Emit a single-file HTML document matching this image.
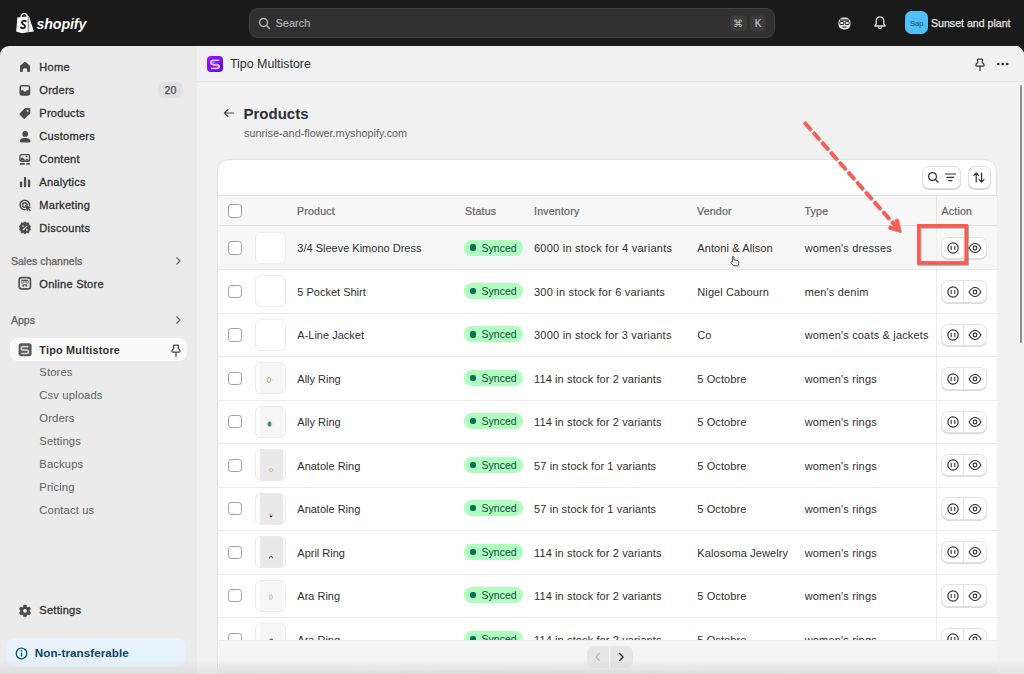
<!DOCTYPE html>
<html><head><meta charset="utf-8">
<style>
*{box-sizing:border-box;margin:0;padding:0}
html,body{width:1024px;height:674px;overflow:hidden;background:#1a1a1a;font-family:"Liberation Sans",sans-serif;color:#303030;font-size:11px}
.a{position:absolute;white-space:nowrap}
.t{position:absolute;white-space:nowrap;line-height:14px}
#frame{position:absolute;left:0;top:46px;width:1024px;height:628px;background:#ebebeb;border-radius:9px 9px 0 0;overflow:hidden}
#main{position:absolute;left:197px;top:0;width:827px;height:628px;background:#f1f1f1}
.nav{position:absolute;left:39.3px;font-size:11.1px;letter-spacing:0.24px;color:#303030;-webkit-text-stroke:0.3px #303030;white-space:nowrap;line-height:14px}
.sub{position:absolute;left:39.3px;font-size:11.3px;letter-spacing:0.1px;color:#616161;white-space:nowrap;line-height:15px}
.si{position:absolute;left:17.8px;width:14px;height:14px}
.sec{position:absolute;left:11px;font-size:10.5px;color:#616161;-webkit-text-stroke:0.25px #616161;line-height:14px}
.hd{font-size:10.6px;letter-spacing:0.2px;color:#616161;-webkit-text-stroke:0.2px #616161}
.rw{position:absolute;left:0;width:778px;height:43.48px}
.cb{position:absolute;left:9.5px;top:15.4px;width:13.6px;height:13.2px;border-radius:3.3px;border:1px solid #a0a0a0;background:#fff}
.th{position:absolute;left:36px;top:6px;width:31.8px;height:32px;border-radius:6px;border:1px solid #ebebeb;background:#fff;overflow:hidden}
.rw .t{top:15.4px;font-size:11px;color:#303030}
.c1{left:78.8px}.c3{left:315.5px;letter-spacing:0.22px}.c4{left:478.8px;letter-spacing:0.1px}.c5{left:586.2px;letter-spacing:0.17px}
.bd{position:absolute;left:245.9px;top:13.5px;width:59px;height:16px;border-radius:8px;background:#affebf;color:#0c4d3a;font-size:10.5px;line-height:16px;padding-left:17.2px;white-space:nowrap}
.dot{position:absolute;left:5.3px;top:4.9px;width:6.2px;height:6.2px;border-radius:2.2px;background:#0d6f55}
.ag{position:absolute;left:722.7px;top:10.6px;width:45.4px;height:22.5px;border-radius:7px;border:1px solid #e3e3e3;background:#fff;box-shadow:0 1px 0 #dcdcdc}
.ag:after{content:"";position:absolute;left:20.8px;top:0;width:1px;height:100%;background:#e3e3e3}
.ic1{position:absolute;left:3.9px;top:3.5px}
.ic2{position:absolute;left:25.7px;top:3.5px}
.chev{position:absolute;left:174px;width:8px;height:10px}
</style></head><body>
<!-- TOP BAR -->
<svg class="a" style="left:16px;top:13px" width="19" height="21" viewBox="0 0 19 21"><path d="M1.3 4.6 L12.8 3.2 L17.7 18.2 L6 20.2 L0.2 18.6 Z" fill="#fff"/><path d="M12.8 3.2 L17.7 18.2 L12.2 19.3 Z" fill="#f0f0f0"/><path d="M12.2 4 L12.2 19.3" stroke="#1a1a1a" stroke-width="0.6"/><path d="M5 4.8 C5 1.5 6.8 0.5 8.4 0.5 C10 0.5 11.3 1.8 11.6 4.2" stroke="#fff" stroke-width="1.3" fill="none"/><path d="M9.8 8.2 C8.6 7.4 6 7.6 6 9.6 C6 11.5 9 11.4 9 13.4 C9 15.2 6.5 15.6 5 14.6" stroke="#1a1a1a" stroke-width="1.9" fill="none" stroke-linecap="round"/></svg>
<div class="a" style="left:36.5px;top:14.5px;font-size:14.2px;font-weight:bold;font-style:italic;color:#fff;line-height:18px;letter-spacing:-0.1px">shopify</div>

<div class="a" style="left:249px;top:8px;width:525.5px;height:29.8px;border-radius:9px;background:#303030;border:1px solid #424242"></div>
<svg class="a" style="left:258.3px;top:16.8px" width="13" height="13" viewBox="0 0 13 13"><circle cx="5.5" cy="5.5" r="4" stroke="#b5b5b5" stroke-width="1.4" fill="none"/><path d="M8.5 8.5 L11.5 11.5" stroke="#b5b5b5" stroke-width="1.4" stroke-linecap="round"/></svg>
<div class="t" style="left:275.5px;top:16px;color:#b9b9b9;font-size:11px;-webkit-text-stroke:0.15px #b9b9b9">Search</div>
<div class="a" style="left:730.4px;top:15.3px;width:16.2px;height:16px;border-radius:4px;background:#3b3b3b;color:#c4c4c4;font-size:10px;line-height:17px;text-align:center">&#8984;</div>
<div class="a" style="left:750.2px;top:15.3px;width:16px;height:16px;border-radius:4px;background:#3b3b3b;color:#c4c4c4;font-size:10px;line-height:17px;text-align:center;-webkit-text-stroke:0.2px #c4c4c4">K</div>

<svg class="a" style="left:837px;top:15.6px" width="15" height="15" viewBox="0 0 15 15"><rect x="1.5" y="1.5" width="12" height="12" rx="5" fill="#e3e3e3"/><rect x="2.8" y="5.5" width="4" height="3" rx="1" fill="none" stroke="#1a1a1a" stroke-width="1"/><rect x="8.2" y="5.5" width="4" height="3" rx="1" fill="none" stroke="#1a1a1a" stroke-width="1"/><path d="M3 4 L12 4" stroke="#1a1a1a" stroke-width="1.2"/><path d="M5.5 11 L9.5 11" stroke="#1a1a1a" stroke-width="1"/></svg>
<svg class="a" style="left:873.3px;top:15.4px" width="14" height="15" viewBox="0 0 14 15"><path d="M7 1.8 C4.5 1.8 3.2 3.8 3.2 6 L3.2 8.8 L1.8 11 L12.2 11 L10.8 8.8 L10.8 6 C10.8 3.8 9.5 1.8 7 1.8 Z" fill="none" stroke="#e3e3e3" stroke-width="1.3" stroke-linejoin="round"/><path d="M5.5 12.8 Q7 14.2 8.5 12.8" stroke="#e3e3e3" stroke-width="1.3" fill="none" stroke-linecap="round"/></svg>
<div class="a" style="left:905px;top:10.9px;width:23.3px;height:23.6px;border-radius:6.5px;background:#4fc1f7;color:#1d4660;font-size:7.6px;line-height:25.5px;text-align:center">Sap</div>
<div class="t" style="left:931px;top:16px;color:#e6e6e6;font-size:10.6px;-webkit-text-stroke:0.25px #e6e6e6">Sunset and plant</div>

<div id="frame">
  <!-- SIDEBAR -->
  <svg class="si" style="top:14.9px" viewBox="0 0 14 14"><path d="M7 1 Q7.5 1 7.9 1.35 L11.6 4.6 Q12 5 12 5.6 L12 10 Q12 11 11 11 L9.2 11 L9.2 8.7 Q9.2 7.3 7 7.3 Q4.8 7.3 4.8 8.7 L4.8 11 L3 11 Q2 11 2 10 L2 5.6 Q2 5 2.4 4.6 L6.1 1.35 Q6.5 1 7 1 Z" fill="#4a4a4a"/></svg>
  <div class="nav" style="top:14px">Home</div>
  <svg class="si" style="top:37.9px" viewBox="0 0 14 14"><rect x="1.5" y="1" width="10.8" height="10.7" rx="2.6" fill="#4a4a4a"/><path d="M3.1 2.6 L10.7 2.6 L10.7 6.3 L8.7 6.3 Q8.3 6.3 8 6.7 L7.5 7.4 Q6.9 8.1 6.3 7.4 L5.8 6.7 Q5.5 6.3 5.1 6.3 L3.1 6.3 Z" fill="#ebebeb"/></svg>
  <div class="nav" style="top:37px">Orders</div>
  <div class="a" style="left:158.2px;top:35.9px;width:24.6px;height:16px;border-radius:6px;background:#e0e0e0;color:#4f4f4f;font-size:10.6px;line-height:16.9px;text-align:center;-webkit-text-stroke:0.25px #4f4f4f">20</div>
  <svg class="si" style="top:60.9px" viewBox="0 0 14 14"><path d="M7.6 1 L11.3 1 Q12.3 1 12.3 2 L12.3 5.7 Q12.3 6.3 11.9 6.7 L6.9 11.6 Q6.2 12.3 5.5 11.6 L1.7 7.8 Q1 7.1 1.7 6.4 L6.6 1.4 Q7 1 7.6 1 Z" fill="#4a4a4a"/><circle cx="9.6" cy="3.7" r="1.05" fill="#ebebeb"/></svg>
  <div class="nav" style="top:60px">Products</div>
  <svg class="si" style="top:83.6px" viewBox="0 0 14 14"><circle cx="7.2" cy="3.9" r="2.9" fill="#4a4a4a"/><path d="M1.9 11.3 Q1.9 7.9 7.2 7.9 Q12.5 7.9 12.5 11.3 Q12.5 12.4 11.4 12.4 L3 12.4 Q1.9 12.4 1.9 11.3 Z" fill="#4a4a4a"/></svg>
  <div class="nav" style="top:83px">Customers</div>
  <svg class="si" style="top:106.9px" viewBox="0 0 14 14"><rect x="1.3" y="1" width="10.9" height="7.9" rx="2" fill="#4a4a4a"/><rect x="2.6" y="2.3" width="8.3" height="5.3" rx="0.8" fill="#ebebeb"/><path d="M2.6 6 L4.3 4.2 L7.3 6.9 L8.8 5.6 L10.9 6.9 L10.9 7.6 L2.6 7.6 Z" fill="#4a4a4a"/><circle cx="8.5" cy="3.6" r="0.85" fill="#4a4a4a"/><rect x="2" y="10.1" width="4.9" height="1.6" rx="0.5" fill="#4a4a4a"/><rect x="8.4" y="10.1" width="3.4" height="1.6" rx="0.5" fill="#4a4a4a"/></svg>
  <div class="nav" style="top:106px">Content</div>
  <svg class="si" style="top:129.8px" viewBox="0 0 14 14"><rect x="1.9" y="5.6" width="2.3" height="5.6" rx="0.9" fill="#4a4a4a"/><rect x="5.9" y="1" width="2.3" height="10.2" rx="0.9" fill="#4a4a4a"/><rect x="9.9" y="3.6" width="2.3" height="7.6" rx="0.9" fill="#4a4a4a"/></svg>
  <div class="nav" style="top:129px">Analytics</div>
  <svg class="si" style="top:152px" viewBox="0 0 14 14"><path d="M11.6 7.3 A4.8 4.8 0 1 0 7.1 11.8" fill="none" stroke="#4a4a4a" stroke-width="1.5" stroke-linecap="round"/><path d="M9.1 6.9 A2.3 2.3 0 1 0 6.8 9.3" fill="none" stroke="#4a4a4a" stroke-width="1.4" stroke-linecap="round"/><path d="M6.9 7 L12.9 9.3 L10.7 10.2 L12.9 12.4 L12.2 13.1 L10 10.9 L9.2 13 Z" fill="#4a4a4a" stroke="#4a4a4a" stroke-width="0.4" stroke-linejoin="round"/></svg>
  <div class="nav" style="top:152px">Marketing</div>
  <svg class="si" style="top:175.3px" viewBox="0 0 14 14"><path d="M7 0.7 L8.6 2 L10.6 1.8 L11 3.8 L12.7 5 L11.9 6.9 L12.7 8.8 L11 10 L10.6 12 L8.6 11.8 L7 13.1 L5.4 11.8 L3.4 12 L3 10 L1.3 8.8 L2.1 6.9 L1.3 5 L3 3.8 L3.4 1.8 L5.4 2 Z" fill="#4a4a4a" stroke="#4a4a4a" stroke-width="0.6" stroke-linejoin="round"/><path d="M5.1 8.9 L8.9 5.1" stroke="#ebebeb" stroke-width="1.1" stroke-linecap="round"/><rect x="4.4" y="4.4" width="1.5" height="1.5" rx="0.3" fill="#ebebeb"/><rect x="8.1" y="8" width="1.5" height="1.7" rx="0.3" fill="#ebebeb"/></svg>
  <div class="nav" style="top:175px">Discounts</div>

  <div class="sec" style="top:208px">Sales channels</div>
  <svg class="chev" style="top:210px" viewBox="0 0 8 10"><path d="M2.5 1.5 L6 5 L2.5 8.5" stroke="#616161" stroke-width="1.2" fill="none"/></svg>
  <svg class="si" style="top:230.3px" viewBox="0 0 14 14"><rect x="1.15" y="1.55" width="11.3" height="11.3" rx="2.4" fill="none" stroke="#545454" stroke-width="1.7"/><rect x="3.3" y="3.7" width="7" height="1.5" fill="#545454"/><path d="M3.3 5.2 L3.3 6.6 Q3.3 7.3 4 7.3 L4.6 7.3 Q5.3 7.3 5.3 6.6 L5.3 5.2 M6.8 5.2 L6.8 6.8 M8.3 5.2 L8.3 6.6 Q8.3 7.3 9 7.3 L9.6 7.3 Q10.3 7.3 10.3 6.6 L10.3 5.2" fill="none" stroke="#6a6a6a" stroke-width="0.9"/><path d="M4.4 10.8 L4.4 8.9 Q4.4 8.2 5.1 8.2 L8.5 8.2 Q9.2 8.2 9.2 8.9 L9.2 10.8 L7.7 10.8 L7.7 9.6 L5.9 9.6 L5.9 10.8 Z" fill="#545454"/></svg>
  <div class="nav" style="top:231px">Online Store</div>

  <div class="sec" style="top:267px">Apps</div>
  <svg class="chev" style="top:269px" viewBox="0 0 8 10"><path d="M2.5 1.5 L6 5 L2.5 8.5" stroke="#616161" stroke-width="1.2" fill="none"/></svg>
  <div class="a" style="left:10px;top:292px;width:177px;height:23px;border-radius:8px;background:#fafafa"></div>
  <svg class="si" style="top:296.7px;left:17.5px" viewBox="0 0 14 14"><rect x="0.6" y="0.2" width="13" height="13" rx="2.6" fill="#5a5a5a"/><path d="M10.4 3.6 L5.3 3.6 Q3.3 3.6 3.3 5.4 Q3.3 7.1 5.3 7.1 L8.6 7.1 Q10.5 7.1 10.5 8.8 Q10.5 10.5 8.6 10.5 L3.3 10.5" stroke="#d2d2d2" stroke-width="1.6" fill="none"/></svg>
  <div class="nav" style="top:296.5px;font-size:10.8px;font-weight:bold;-webkit-text-stroke:0">Tipo Multistore</div>
  <svg class="a" style="left:169.5px;top:297.5px" width="12" height="13" viewBox="0 0 12 13"><path d="M4.2 1.1 L7.8 1.1 Q8.8 1.1 8.6 2.1 L8.1 4.5 Q9.9 5.5 10.1 7.1 Q10.2 8.1 9.3 8.1 L2.7 8.1 Q1.8 8.1 1.9 7.1 Q2.1 5.5 3.9 4.5 L3.4 2.1 Q3.2 1.1 4.2 1.1 Z" fill="none" stroke="#4a4a4a" stroke-width="1.15" stroke-linejoin="round"/><path d="M6 8.1 L6 12.4" stroke="#4a4a4a" stroke-width="1.2" stroke-linecap="round"/></svg>
  <div class="sub" style="top:319px">Stores</div>
  <div class="sub" style="top:342px">Csv uploads</div>
  <div class="sub" style="top:365px">Orders</div>
  <div class="sub" style="top:388px">Settings</div>
  <div class="sub" style="top:411px">Backups</div>
  <div class="sub" style="top:434px">Pricing</div>
  <div class="sub" style="top:457px">Contact us</div>

  <svg class="si" style="top:557.6px" viewBox="0 0 14 14"><path d="M5.8 1 L8.2 1 L8.6 2.7 L9.8 3.4 L11.5 2.9 L12.7 5 L11.4 6.2 L11.4 7.6 L12.7 8.8 L11.5 10.9 L9.8 10.4 L8.6 11.1 L8.2 12.8 L5.8 12.8 L5.4 11.1 L4.2 10.4 L2.5 10.9 L1.3 8.8 L2.6 7.6 L2.6 6.2 L1.3 5 L2.5 2.9 L4.2 3.4 L5.4 2.7 Z" fill="#4a4a4a" stroke="#4a4a4a" stroke-width="0.5" stroke-linejoin="round"/><circle cx="7" cy="6.9" r="1.9" fill="#ebebeb"/></svg>
  <div class="nav" style="top:557px">Settings</div>

  <div class="a" style="left:6.8px;top:592px;width:178px;height:29px;border-radius:8px;background:#e7f2fc"></div>
  <svg class="a" style="left:15px;top:600.5px" width="13" height="13" viewBox="0 0 13 13"><circle cx="6.5" cy="6.5" r="5.3" fill="none" stroke="#00527c" stroke-width="1.3"/><path d="M6.5 5.8 L6.5 9.5" stroke="#00527c" stroke-width="1.4"/><circle cx="6.5" cy="3.9" r="0.8" fill="#00527c"/></svg>
  <div class="nav" style="left:34.8px;top:600px;color:#0e4466;font-size:11.6px;font-weight:bold;-webkit-text-stroke:0;letter-spacing:0.08px">Non-transferable</div>

  <div id="main"></div>
</div>
<!-- MAIN -->
<div class="a" style="left:197px;top:81px;width:827px;height:1px;background:#e6e6e6"></div>
<div class="a" style="left:207px;top:56px;width:16px;height:16px;border-radius:4px;background:linear-gradient(135deg,#a214ff,#5b06e6)"></div>
<svg class="a" style="left:207px;top:56px" width="16" height="16" viewBox="0 0 16 16"><path d="M12.3 4.4 L6.3 4.4 Q4 4.4 4 6.6 Q4 8.7 6.3 8.7 L9.7 8.7 Q12 8.7 12 10.5 Q12 12.4 9.7 12.4 L3.9 12.4" stroke="#dcbfff" stroke-width="1.9" fill="none"/><circle cx="6.3" cy="6.6" r="1.4" fill="#1fa8ff"/><circle cx="9.6" cy="9.3" r="1.4" fill="#ffa21a"/></svg>
<div class="t" style="left:230px;top:57px;font-size:12.4px;color:#303030">Tipo Multistore</div>
<svg class="a" style="left:973.6px;top:57.5px" width="12" height="13" viewBox="0 0 12 13"><path d="M4.2 1.1 L7.8 1.1 Q8.8 1.1 8.6 2.1 L8.1 4.5 Q9.9 5.5 10.1 7.1 Q10.2 8.1 9.3 8.1 L2.7 8.1 Q1.8 8.1 1.9 7.1 Q2.1 5.5 3.9 4.5 L3.4 2.1 Q3.2 1.1 4.2 1.1 Z" fill="none" stroke="#303030" stroke-width="1.15" stroke-linejoin="round"/><path d="M6 8.1 L6 12.4" stroke="#303030" stroke-width="1.2" stroke-linecap="round"/></svg>
<svg class="a" style="left:996px;top:62px" width="14" height="5" viewBox="0 0 14 5"><circle cx="2.2" cy="2" r="1.3" fill="#303030"/><circle cx="6.7" cy="2" r="1.3" fill="#303030"/><circle cx="11.2" cy="2" r="1.3" fill="#303030"/></svg>
<div class="a" style="left:1020.2px;top:85px;width:2.2px;height:258px;border-radius:1.5px;background:#8f8f8f"></div>

<svg class="a" style="left:222px;top:107px" width="14" height="12" viewBox="0 0 14 12"><path d="M11.7 6 L2.6 6 M6 2.5 L2.4 6 L6 9.5" stroke="#4a4a4a" stroke-width="1.15" fill="none" stroke-linecap="round" stroke-linejoin="round"/></svg>
<div class="t" style="left:243.5px;top:105px;font-size:15px;font-weight:bold;color:#303030;line-height:18px">Products</div>
<div class="t" style="left:244px;top:126px;font-size:10.85px;color:#616161">sunrise-and-flower.myshopify.com</div>

<!-- CARD -->
<div class="a" style="left:217.3px;top:159px;width:780px;height:520px;border-radius:12px;background:#fff;border:1px solid #e3e3e3"></div>
<div class="a" style="left:922.3px;top:166.3px;width:38.8px;height:22.3px;border-radius:7px;background:#fff;border:1px solid #dedede;box-shadow:0 1px 0 #d4d4d4"></div>
<svg class="a" style="left:927px;top:171px" width="14" height="13" viewBox="0 0 14 13"><circle cx="5.5" cy="5.5" r="3.9" stroke="#303030" stroke-width="1.3" fill="none"/><path d="M8.4 8.4 L11 11" stroke="#303030" stroke-width="1.3" stroke-linecap="round"/></svg>
<svg class="a" style="left:942.5px;top:171px" width="14" height="13" viewBox="0 0 14 13"><path d="M2.3 3 L12.5 3 M4 6.3 L10.8 6.3 M5.8 9.6 L9 9.6" stroke="#303030" stroke-width="1.2" stroke-linecap="round"/></svg>
<div class="a" style="left:968.3px;top:166.3px;width:22.5px;height:22.3px;border-radius:7px;background:#fff;border:1px solid #dedede;box-shadow:0 1px 0 #d4d4d4"></div>
<svg class="a" style="left:972px;top:171px" width="14" height="13" viewBox="0 0 14 13"><path d="M4.2 11 L4.2 2 M1.8 4.4 L4.2 2 L6.6 4.4 M9.6 2 L9.6 11 M7.2 8.6 L9.6 11 L12 8.6" stroke="#303030" stroke-width="1.2" fill="none" stroke-linecap="round" stroke-linejoin="round"/></svg>

<div class="a" style="left:218.5px;top:195px;width:778px;height:31px;background:#f7f7f7;border-top:1px solid #e3e3e3;border-bottom:1px solid #e3e3e3"></div>
<div class="a" style="left:228px;top:204.2px;width:13.6px;height:13.4px;border-radius:3.3px;border:1px solid #a0a0a0;background:#fff"></div>
<div class="t hd" style="left:297px;top:204px">Product</div>
<div class="t hd" style="left:465px;top:204px">Status</div>
<div class="t hd" style="left:534px;top:204px">Inventory</div>
<div class="t hd" style="left:697px;top:204px">Vendor</div>
<div class="t hd" style="left:804.5px;top:204px">Type</div>
<div class="t hd" style="left:941.5px;top:204px">Action</div>
<div class="a" style="left:935.8px;top:196px;width:1px;height:30px;background:#e3e3e3"></div>
<!--ROWS--><div class="a" style="left:218.5px;top:226px;width:778px;height:414.4px;overflow:hidden">
<div class="rw" style="top:0.0px;background:#f7f7f7">
<div class="cb"></div>
<div class="th"></div>
<div class="t c1">3/4 Sleeve Kimono Dress</div>
<div class="bd"><span class="dot"></span>Synced</div>
<div class="t c3" style="letter-spacing:0.24px">6000 in stock for 4 variants</div>
<div class="t c4">Antoni &amp; Alison</div>
<div class="t c5">women&#39;s dresses</div>
<div class="ag"><svg class="ic1" width="14" height="14" viewBox="0 0 14 14"><circle cx="7" cy="7" r="5.15" fill="none" stroke="#303030" stroke-width="1.15"/><path d="M5.2 5.4 L5.2 8.6 M8.8 5.4 L8.8 8.6" stroke="#303030" stroke-width="1.1" stroke-linecap="round"/></svg><svg class="ic2" width="14" height="14" viewBox="0 0 14 14"><path d="M1.1 7 C2.9 3.7 4.9 2.5 7 2.5 C9.1 2.5 11.1 3.7 12.9 7 C11.1 10.3 9.1 11.5 7 11.5 C4.9 11.5 2.9 10.3 1.1 7 Z" fill="none" stroke="#303030" stroke-width="1.1" stroke-linejoin="round"/><circle cx="7" cy="7" r="1.85" fill="none" stroke="#303030" stroke-width="1.15"/></svg></div>
</div>
<div class="rw" style="top:43.48px;background:#fff">
<div class="cb"></div>
<div class="th"></div>
<div class="t c1">5 Pocket Shirt</div>
<div class="bd"><span class="dot"></span>Synced</div>
<div class="t c3" style="letter-spacing:0.21px">300 in stock for 6 variants</div>
<div class="t c4">Nigel Cabourn</div>
<div class="t c5">men&#39;s denim</div>
<div class="ag"><svg class="ic1" width="14" height="14" viewBox="0 0 14 14"><circle cx="7" cy="7" r="5.15" fill="none" stroke="#303030" stroke-width="1.15"/><path d="M5.2 5.4 L5.2 8.6 M8.8 5.4 L8.8 8.6" stroke="#303030" stroke-width="1.1" stroke-linecap="round"/></svg><svg class="ic2" width="14" height="14" viewBox="0 0 14 14"><path d="M1.1 7 C2.9 3.7 4.9 2.5 7 2.5 C9.1 2.5 11.1 3.7 12.9 7 C11.1 10.3 9.1 11.5 7 11.5 C4.9 11.5 2.9 10.3 1.1 7 Z" fill="none" stroke="#303030" stroke-width="1.1" stroke-linejoin="round"/><circle cx="7" cy="7" r="1.85" fill="none" stroke="#303030" stroke-width="1.15"/></svg></div>
</div>
<div class="rw" style="top:86.96px;background:#fff">
<div class="cb"></div>
<div class="th"></div>
<div class="t c1">A-Line Jacket</div>
<div class="bd"><span class="dot"></span>Synced</div>
<div class="t c3" style="letter-spacing:0.22px">3000 in stock for 3 variants</div>
<div class="t c4">Co</div>
<div class="t c5">women&#39;s coats &amp; jackets</div>
<div class="ag"><svg class="ic1" width="14" height="14" viewBox="0 0 14 14"><circle cx="7" cy="7" r="5.15" fill="none" stroke="#303030" stroke-width="1.15"/><path d="M5.2 5.4 L5.2 8.6 M8.8 5.4 L8.8 8.6" stroke="#303030" stroke-width="1.1" stroke-linecap="round"/></svg><svg class="ic2" width="14" height="14" viewBox="0 0 14 14"><path d="M1.1 7 C2.9 3.7 4.9 2.5 7 2.5 C9.1 2.5 11.1 3.7 12.9 7 C11.1 10.3 9.1 11.5 7 11.5 C4.9 11.5 2.9 10.3 1.1 7 Z" fill="none" stroke="#303030" stroke-width="1.1" stroke-linejoin="round"/><circle cx="7" cy="7" r="1.85" fill="none" stroke="#303030" stroke-width="1.15"/></svg></div>
</div>
<div class="rw" style="top:130.44px;background:#fff">
<div class="cb"></div>
<div class="th"><svg width="30" height="30" viewBox="0 0 30 30" style="position:absolute;left:0;top:0"><rect x="3.8" y="0" width="23.5" height="30" fill="#f6f6f6"/><ellipse cx="12.9" cy="17" rx="1.7" ry="2.5" fill="#f4f1ea" stroke="#c29a5c" stroke-width="0.85" transform="rotate(15 12.9 17)"/><path d="M14.6 16.8 L17 17.2" stroke="#d9c49a" stroke-width="0.6"/></svg></div>
<div class="t c1">Ally Ring</div>
<div class="bd"><span class="dot"></span>Synced</div>
<div class="t c3" style="letter-spacing:0.115px">114 in stock for 2 variants</div>
<div class="t c4">5 Octobre</div>
<div class="t c5">women&#39;s rings</div>
<div class="ag"><svg class="ic1" width="14" height="14" viewBox="0 0 14 14"><circle cx="7" cy="7" r="5.15" fill="none" stroke="#303030" stroke-width="1.15"/><path d="M5.2 5.4 L5.2 8.6 M8.8 5.4 L8.8 8.6" stroke="#303030" stroke-width="1.1" stroke-linecap="round"/></svg><svg class="ic2" width="14" height="14" viewBox="0 0 14 14"><path d="M1.1 7 C2.9 3.7 4.9 2.5 7 2.5 C9.1 2.5 11.1 3.7 12.9 7 C11.1 10.3 9.1 11.5 7 11.5 C4.9 11.5 2.9 10.3 1.1 7 Z" fill="none" stroke="#303030" stroke-width="1.1" stroke-linejoin="round"/><circle cx="7" cy="7" r="1.85" fill="none" stroke="#303030" stroke-width="1.15"/></svg></div>
</div>
<div class="rw" style="top:173.92px;background:#fff">
<div class="cb"></div>
<div class="th"><svg width="30" height="30" viewBox="0 0 30 30" style="position:absolute;left:0;top:0"><rect x="3.8" y="0" width="23.5" height="30" fill="#f6f6f6"/><ellipse cx="13.5" cy="17" rx="1.9" ry="2.5" fill="#17966a" stroke="#c9a66b" stroke-width="0.5"/><path d="M15.4 17 L17 17" stroke="#d9c49a" stroke-width="0.5"/></svg></div>
<div class="t c1">Ally Ring</div>
<div class="bd"><span class="dot"></span>Synced</div>
<div class="t c3" style="letter-spacing:0.115px">114 in stock for 2 variants</div>
<div class="t c4">5 Octobre</div>
<div class="t c5">women&#39;s rings</div>
<div class="ag"><svg class="ic1" width="14" height="14" viewBox="0 0 14 14"><circle cx="7" cy="7" r="5.15" fill="none" stroke="#303030" stroke-width="1.15"/><path d="M5.2 5.4 L5.2 8.6 M8.8 5.4 L8.8 8.6" stroke="#303030" stroke-width="1.1" stroke-linecap="round"/></svg><svg class="ic2" width="14" height="14" viewBox="0 0 14 14"><path d="M1.1 7 C2.9 3.7 4.9 2.5 7 2.5 C9.1 2.5 11.1 3.7 12.9 7 C11.1 10.3 9.1 11.5 7 11.5 C4.9 11.5 2.9 10.3 1.1 7 Z" fill="none" stroke="#303030" stroke-width="1.1" stroke-linejoin="round"/><circle cx="7" cy="7" r="1.85" fill="none" stroke="#303030" stroke-width="1.15"/></svg></div>
</div>
<div class="rw" style="top:217.4px;background:#fff">
<div class="cb"></div>
<div class="th"><svg width="30" height="30" viewBox="0 0 30 30" style="position:absolute;left:0;top:0"><rect x="3.8" y="0" width="23.5" height="30" fill="#e9e9e9"/><ellipse cx="15" cy="20.2" rx="1.9" ry="1.4" fill="#f1e7d6" stroke="#d1ad78" stroke-width="0.8"/></svg></div>
<div class="t c1">Anatole Ring</div>
<div class="bd"><span class="dot"></span>Synced</div>
<div class="t c3" style="letter-spacing:0.115px">57 in stock for 1 variants</div>
<div class="t c4">5 Octobre</div>
<div class="t c5">women&#39;s rings</div>
<div class="ag"><svg class="ic1" width="14" height="14" viewBox="0 0 14 14"><circle cx="7" cy="7" r="5.15" fill="none" stroke="#303030" stroke-width="1.15"/><path d="M5.2 5.4 L5.2 8.6 M8.8 5.4 L8.8 8.6" stroke="#303030" stroke-width="1.1" stroke-linecap="round"/></svg><svg class="ic2" width="14" height="14" viewBox="0 0 14 14"><path d="M1.1 7 C2.9 3.7 4.9 2.5 7 2.5 C9.1 2.5 11.1 3.7 12.9 7 C11.1 10.3 9.1 11.5 7 11.5 C4.9 11.5 2.9 10.3 1.1 7 Z" fill="none" stroke="#303030" stroke-width="1.1" stroke-linejoin="round"/><circle cx="7" cy="7" r="1.85" fill="none" stroke="#303030" stroke-width="1.15"/></svg></div>
</div>
<div class="rw" style="top:260.88px;background:#fff">
<div class="cb"></div>
<div class="th"><svg width="30" height="30" viewBox="0 0 30 30" style="position:absolute;left:0;top:0"><rect x="3.8" y="0" width="23.5" height="30" fill="#e9e9e9"/><ellipse cx="15" cy="21.5" rx="1.8" ry="1.4" fill="none" stroke="#d1ad78" stroke-width="0.8"/><rect x="14" y="21.6" width="2" height="1.5" fill="#3a3030"/></svg></div>
<div class="t c1">Anatole Ring</div>
<div class="bd"><span class="dot"></span>Synced</div>
<div class="t c3" style="letter-spacing:0.115px">57 in stock for 1 variants</div>
<div class="t c4">5 Octobre</div>
<div class="t c5">women&#39;s rings</div>
<div class="ag"><svg class="ic1" width="14" height="14" viewBox="0 0 14 14"><circle cx="7" cy="7" r="5.15" fill="none" stroke="#303030" stroke-width="1.15"/><path d="M5.2 5.4 L5.2 8.6 M8.8 5.4 L8.8 8.6" stroke="#303030" stroke-width="1.1" stroke-linecap="round"/></svg><svg class="ic2" width="14" height="14" viewBox="0 0 14 14"><path d="M1.1 7 C2.9 3.7 4.9 2.5 7 2.5 C9.1 2.5 11.1 3.7 12.9 7 C11.1 10.3 9.1 11.5 7 11.5 C4.9 11.5 2.9 10.3 1.1 7 Z" fill="none" stroke="#303030" stroke-width="1.1" stroke-linejoin="round"/><circle cx="7" cy="7" r="1.85" fill="none" stroke="#303030" stroke-width="1.15"/></svg></div>
</div>
<div class="rw" style="top:304.36px;background:#fff">
<div class="cb"></div>
<div class="th"><svg width="30" height="30" viewBox="0 0 30 30" style="position:absolute;left:0;top:0"><rect x="3.8" y="0" width="23.5" height="30" fill="#e9e9e9"/><path d="M13.3 21.2 Q15 17.8 16.8 21.2" fill="none" stroke="#5a5050" stroke-width="1.2"/></svg></div>
<div class="t c1">April Ring</div>
<div class="bd"><span class="dot"></span>Synced</div>
<div class="t c3" style="letter-spacing:0.115px">114 in stock for 2 variants</div>
<div class="t c4">Kalosoma Jewelry</div>
<div class="t c5">women&#39;s rings</div>
<div class="ag"><svg class="ic1" width="14" height="14" viewBox="0 0 14 14"><circle cx="7" cy="7" r="5.15" fill="none" stroke="#303030" stroke-width="1.15"/><path d="M5.2 5.4 L5.2 8.6 M8.8 5.4 L8.8 8.6" stroke="#303030" stroke-width="1.1" stroke-linecap="round"/></svg><svg class="ic2" width="14" height="14" viewBox="0 0 14 14"><path d="M1.1 7 C2.9 3.7 4.9 2.5 7 2.5 C9.1 2.5 11.1 3.7 12.9 7 C11.1 10.3 9.1 11.5 7 11.5 C4.9 11.5 2.9 10.3 1.1 7 Z" fill="none" stroke="#303030" stroke-width="1.1" stroke-linejoin="round"/><circle cx="7" cy="7" r="1.85" fill="none" stroke="#303030" stroke-width="1.15"/></svg></div>
</div>
<div class="rw" style="top:347.84px;background:#fff">
<div class="cb"></div>
<div class="th"><svg width="30" height="30" viewBox="0 0 30 30" style="position:absolute;left:0;top:0"><rect x="3.8" y="0" width="23.5" height="30" fill="#f6f6f6"/><ellipse cx="14.8" cy="16.2" rx="1.6" ry="2.6" fill="#d9eee3" stroke="#d1b27a" stroke-width="0.6"/></svg></div>
<div class="t c1">Ara Ring</div>
<div class="bd"><span class="dot"></span>Synced</div>
<div class="t c3" style="letter-spacing:0.115px">114 in stock for 2 variants</div>
<div class="t c4">5 Octobre</div>
<div class="t c5">women&#39;s rings</div>
<div class="ag"><svg class="ic1" width="14" height="14" viewBox="0 0 14 14"><circle cx="7" cy="7" r="5.15" fill="none" stroke="#303030" stroke-width="1.15"/><path d="M5.2 5.4 L5.2 8.6 M8.8 5.4 L8.8 8.6" stroke="#303030" stroke-width="1.1" stroke-linecap="round"/></svg><svg class="ic2" width="14" height="14" viewBox="0 0 14 14"><path d="M1.1 7 C2.9 3.7 4.9 2.5 7 2.5 C9.1 2.5 11.1 3.7 12.9 7 C11.1 10.3 9.1 11.5 7 11.5 C4.9 11.5 2.9 10.3 1.1 7 Z" fill="none" stroke="#303030" stroke-width="1.1" stroke-linejoin="round"/><circle cx="7" cy="7" r="1.85" fill="none" stroke="#303030" stroke-width="1.15"/></svg></div>
</div>
<div class="rw" style="top:391.32px;background:#fff">
<div class="cb"></div>
<div class="th"><svg width="30" height="30" viewBox="0 0 30 30" style="position:absolute;left:0;top:0"><rect x="3.8" y="0" width="23.5" height="30" fill="#f6f6f6"/><ellipse cx="15.3" cy="16.2" rx="2" ry="1.6" fill="#1f9a6c"/></svg></div>
<div class="t c1">Ara Ring</div>
<div class="bd"><span class="dot"></span>Synced</div>
<div class="t c3" style="letter-spacing:0.115px">114 in stock for 2 variants</div>
<div class="t c4">5 Octobre</div>
<div class="t c5">women&#39;s rings</div>
<div class="ag"><svg class="ic1" width="14" height="14" viewBox="0 0 14 14"><circle cx="7" cy="7" r="5.15" fill="none" stroke="#303030" stroke-width="1.15"/><path d="M5.2 5.4 L5.2 8.6 M8.8 5.4 L8.8 8.6" stroke="#303030" stroke-width="1.1" stroke-linecap="round"/></svg><svg class="ic2" width="14" height="14" viewBox="0 0 14 14"><path d="M1.1 7 C2.9 3.7 4.9 2.5 7 2.5 C9.1 2.5 11.1 3.7 12.9 7 C11.1 10.3 9.1 11.5 7 11.5 C4.9 11.5 2.9 10.3 1.1 7 Z" fill="none" stroke="#303030" stroke-width="1.1" stroke-linejoin="round"/><circle cx="7" cy="7" r="1.85" fill="none" stroke="#303030" stroke-width="1.15"/></svg></div>
</div>
<div class="a" style="left:0;top:43.18px;width:778px;height:1px;background:#ebebeb"></div>
<div class="a" style="left:0;top:86.66px;width:778px;height:1px;background:#ebebeb"></div>
<div class="a" style="left:0;top:130.14px;width:778px;height:1px;background:#ebebeb"></div>
<div class="a" style="left:0;top:173.62px;width:778px;height:1px;background:#ebebeb"></div>
<div class="a" style="left:0;top:217.1px;width:778px;height:1px;background:#ebebeb"></div>
<div class="a" style="left:0;top:260.58px;width:778px;height:1px;background:#ebebeb"></div>
<div class="a" style="left:0;top:304.06px;width:778px;height:1px;background:#ebebeb"></div>
<div class="a" style="left:0;top:347.54px;width:778px;height:1px;background:#ebebeb"></div>
<div class="a" style="left:0;top:391.02px;width:778px;height:1px;background:#ebebeb"></div>
<div class="a" style="left:717.3px;top:43px;width:1px;height:372px;background:#ebebeb"></div>
<div class="a" style="left:717.3px;top:0;width:1px;height:43px;background:#efefef"></div>
</div><!--/ROWS-->


<!-- FOOTER -->
<div class="a" style="left:218.5px;top:640.4px;width:778px;height:34px;background:linear-gradient(#f6f6f6 0%,#f3f3f3 55%,#ececec 100%);border-top:1px solid #ececec"></div>
<div class="a" style="left:150px;top:655px;width:760px;height:30px;background:radial-gradient(ellipse 50% 60% at 50% 100%,rgba(0,0,0,0.05),rgba(0,0,0,0))"></div>
<div class="a" style="left:586.5px;top:646px;width:46px;height:22px;border-radius:7px;background:#e6e6e6"></div>
<div class="a" style="left:609px;top:646px;width:1px;height:22px;background:#f3f3f3"></div>
<svg class="a" style="left:592px;top:651px" width="12" height="12" viewBox="0 0 12 12"><path d="M7.3 2.5 L4 6 L7.3 9.5" stroke="#b5b5b5" stroke-width="1.2" fill="none" stroke-linecap="round" stroke-linejoin="round"/></svg>
<svg class="a" style="left:615px;top:651px" width="12" height="12" viewBox="0 0 12 12"><path d="M4.7 2.5 L8 6 L4.7 9.5" stroke="#303030" stroke-width="1.4" fill="none" stroke-linecap="round" stroke-linejoin="round"/></svg>

<svg class="a" style="left:730px;top:256px" width="10" height="11" viewBox="0 0 10 11"><path d="M2.3 5 L2.3 1.3 Q2.3 0.5 3.1 0.5 Q3.9 0.5 3.9 1.3 L3.9 3.8 L5.8 4.1 L7.9 4.7 Q8.7 5 8.7 5.9 L8.7 8 L7.7 9.8 L3.7 9.8 L1.1 6.9 Q0.6 6.2 1.3 5.8 Q1.9 5.5 2.3 6 Z" fill="#fff" stroke="#2a2a2a" stroke-width="0.85" stroke-linejoin="round"/><path d="M5.3 6.5 L5.3 8.3 M6.6 6.5 L6.6 8.3" stroke="#999" stroke-width="0.5"/></svg>
<!-- ANNOTATIONS -->
<svg class="a" style="left:0;top:0" width="1024" height="674" viewBox="0 0 1024 674">
<defs><filter id="sh" x="-10%" y="-10%" width="130%" height="130%"><feDropShadow dx="0.6" dy="0.9" stdDeviation="0.5" flood-color="#000" flood-opacity="0.55"/></filter></defs>
<g filter="url(#sh)">
<path d="M804.3 122.2 L893.5 223.6" stroke="#fd5a4e" stroke-width="3.5" stroke-dasharray="9.8 3.4" fill="none"/>
<path d="M891.9 221.3 L897.6 227.7" stroke="#fd5a4e" stroke-width="3.5" fill="none"/><path d="M888.6 226.9 L898.9 229.9 L896.4 219" stroke="#fd5a4e" stroke-width="3.4" fill="none" stroke-linejoin="miter" stroke-miterlimit="10"/>
<rect x="918.7" y="225.7" width="47.5" height="37.1" fill="none" stroke="#fd5a4e" stroke-width="3.4"/>
</g>
</svg>
<div class="a" style="left:0;top:660px;width:1024px;height:14px;background:linear-gradient(rgba(0,0,0,0),rgba(0,0,0,0.06));pointer-events:none"></div>
</body></html>
